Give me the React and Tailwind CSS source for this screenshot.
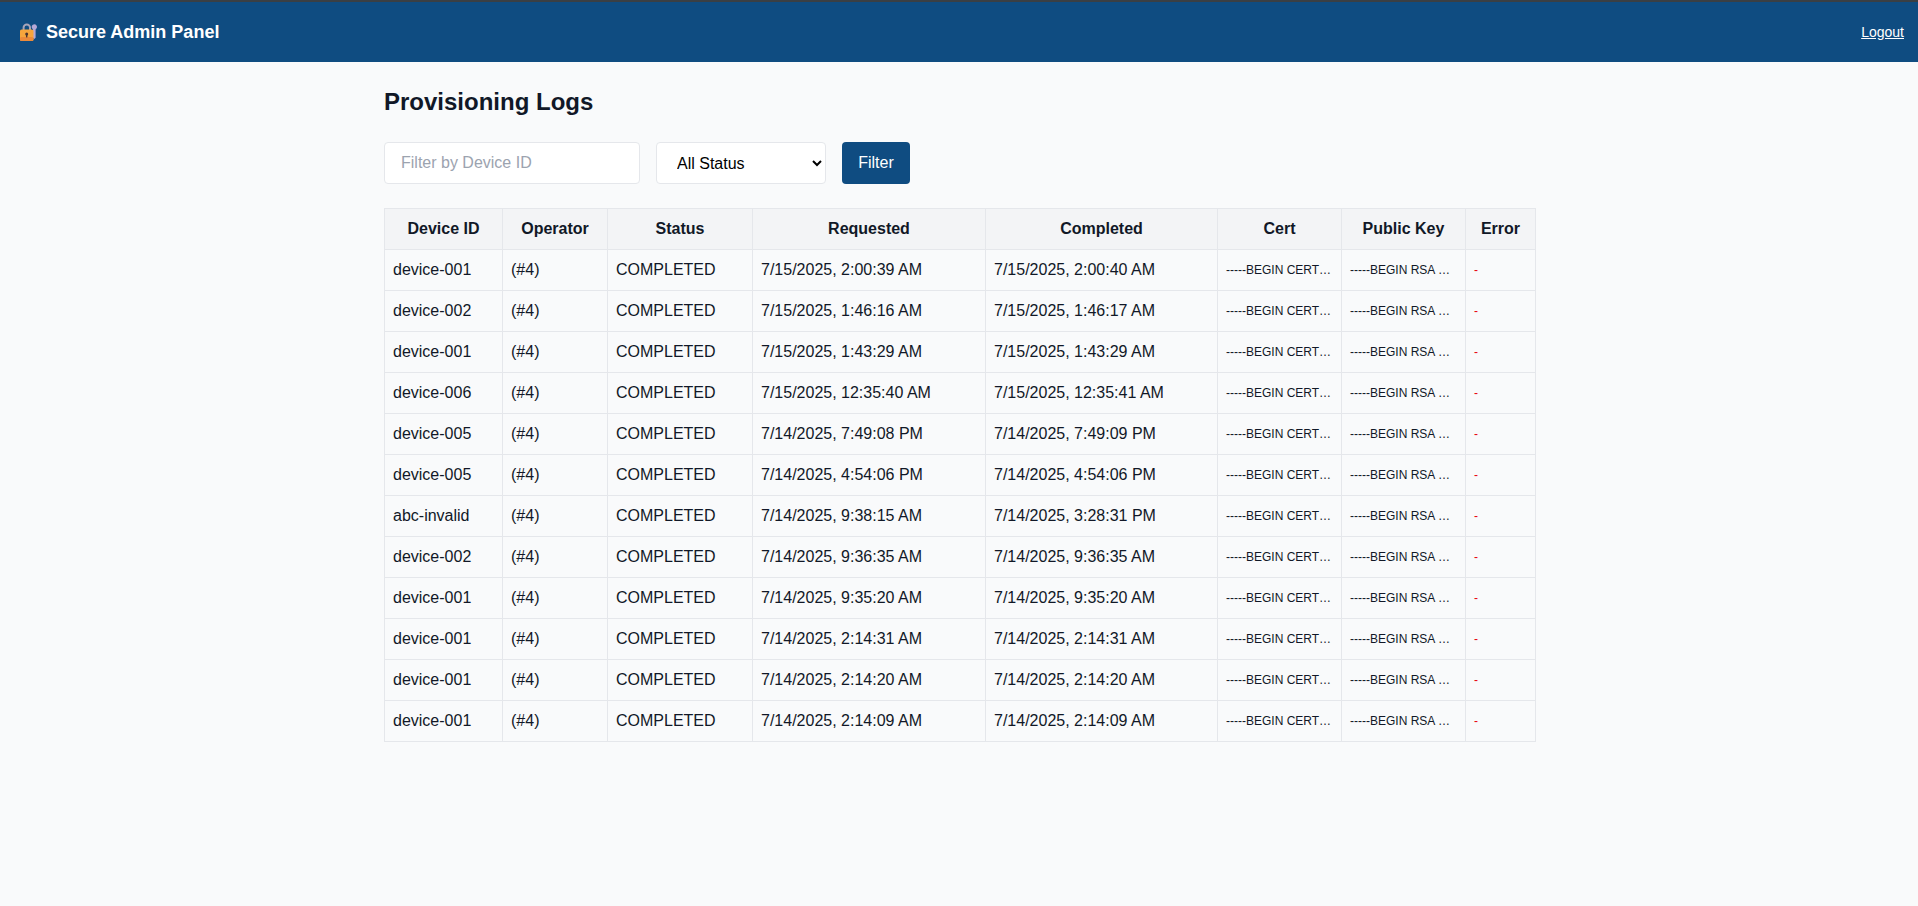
import React from 'react';

const rows = [
  ['device-001', '7/15/2025, 2:00:39 AM', '7/15/2025, 2:00:40 AM'],
  ['device-002', '7/15/2025, 1:46:16 AM', '7/15/2025, 1:46:17 AM'],
  ['device-001', '7/15/2025, 1:43:29 AM', '7/15/2025, 1:43:29 AM'],
  ['device-006', '7/15/2025, 12:35:40 AM', '7/15/2025, 12:35:41 AM'],
  ['device-005', '7/14/2025, 7:49:08 PM', '7/14/2025, 7:49:09 PM'],
  ['device-005', '7/14/2025, 4:54:06 PM', '7/14/2025, 4:54:06 PM'],
  ['abc-invalid', '7/14/2025, 9:38:15 AM', '7/14/2025, 3:28:31 PM'],
  ['device-002', '7/14/2025, 9:36:35 AM', '7/14/2025, 9:36:35 AM'],
  ['device-001', '7/14/2025, 9:35:20 AM', '7/14/2025, 9:35:20 AM'],
  ['device-001', '7/14/2025, 2:14:31 AM', '7/14/2025, 2:14:31 AM'],
  ['device-001', '7/14/2025, 2:14:20 AM', '7/14/2025, 2:14:20 AM'],
  ['device-001', '7/14/2025, 2:14:09 AM', '7/14/2025, 2:14:09 AM'],
];

const columns = [
  ['Device ID', 'w-[118px]'],
  ['Operator', 'w-[105px]'],
  ['Status', 'w-[145px]'],
  ['Requested', 'w-[233px]'],
  ['Completed', 'w-[232px]'],
  ['Cert', 'w-[124px]'],
  ['Public Key', 'w-[124px]'],
  ['Error', 'w-[70px]'],
];

const LockKeyIcon = () => (
  <svg width="20" height="20" viewBox="0 0 20 20" className="shrink-0">
    <path d="M15.2 2.2a2.8 2.8 0 0 1 2.6 3.9l-1.2 1.4v8.2l-1.3 1.4-1.3-1.3V7.5l-1.1-1.4a2.8 2.8 0 0 1 2.3-3.9z" fill="#b5a8d6" />
    <path d="M3.6 9V5.6a4.2 4.2 0 0 1 8.4 0V9h-2V5.6a2.2 2.2 0 0 0-4.4 0V9z" fill="#a8a4b8" />
    <rect x="1" y="7.5" width="13.5" height="11.5" rx="1.6" fill="#f6a53c" />
    <rect x="1" y="15" width="13.5" height="4" rx="1.6" fill="#ec8a3a" />
    <circle cx="7.7" cy="12" r="1.5" fill="#4a3330" />
    <rect x="7" y="12" width="1.4" height="3.4" fill="#4a3330" />
  </svg>
);

const Header = () => (
  <header className="h-[62px] bg-[#0f4c81] border-t-2 border-[#3a3f44] flex items-center justify-between pl-[19px] pr-[14px] text-white">
    <div className="flex items-center gap-[7px] text-lg font-bold">
      <LockKeyIcon />
      <span>Secure Admin Panel</span>
    </div>
    <a href="#" className="text-sm underline">Logout</a>
  </header>
);

const FilterBar = () => (
  <div className="flex gap-4 mb-6">
    <input
      placeholder="Filter by Device ID"
      className="w-[256px] h-[42px] px-4 bg-white border border-[#e5e7eb] rounded text-base outline-none placeholder:text-[#9ca3af]"
    />
    <select className="w-[170px] h-[42px] px-4 bg-white border border-[#e5e7eb] rounded text-base text-black">
      <option>All Status</option>
      <option>COMPLETED</option>
      <option>PENDING</option>
      <option>FAILED</option>
    </select>
    <button className="w-[68px] h-[42px] bg-[#0f4c81] text-white rounded text-base">Filter</button>
  </div>
);

const LogsTable = () => (
  <table className="w-[1151px] table-fixed border-collapse text-base">
    <thead>
      <tr className="h-[41px] bg-[#f3f4f6]">
        {columns.map(([label, width]) => (
          <th key={label} className={`${width} border border-[#e5e7eb] px-2 text-center font-bold`}>{label}</th>
        ))}
      </tr>
    </thead>
    <tbody>
      {rows.map(([device, requested, completed], i) => (
        <tr key={i} className="h-[41px]">
          <td className="border border-[#e5e7eb] px-2">{device}</td>
          <td className="border border-[#e5e7eb] px-2">(#4)</td>
          <td className="border border-[#e5e7eb] px-2">COMPLETED</td>
          <td className="border border-[#e5e7eb] px-2">{requested}</td>
          <td className="border border-[#e5e7eb] px-2">{completed}</td>
          <td className="border border-[#e5e7eb] px-2 text-xs truncate">-----BEGIN CERTIFICATE-----</td>
          <td className="border border-[#e5e7eb] px-2 text-xs truncate">-----BEGIN RSA PUBLIC KEY-----</td>
          <td className="border border-[#e5e7eb] px-2 text-xs text-red-600">-</td>
        </tr>
      ))}
    </tbody>
  </table>
);

export default function App() {
  return (
    <div className="min-h-screen bg-[#f9fafb] text-[#111827] font-['Liberation_Sans',Arial,sans-serif]">
      <Header />
      <main className="w-[1151px] ml-[384px] pt-[26px]">
        <h2 className="text-2xl font-bold leading-[28px] mb-[26px]">Provisioning Logs</h2>
        <FilterBar />
        <LogsTable />
      </main>
    </div>
  );
}
